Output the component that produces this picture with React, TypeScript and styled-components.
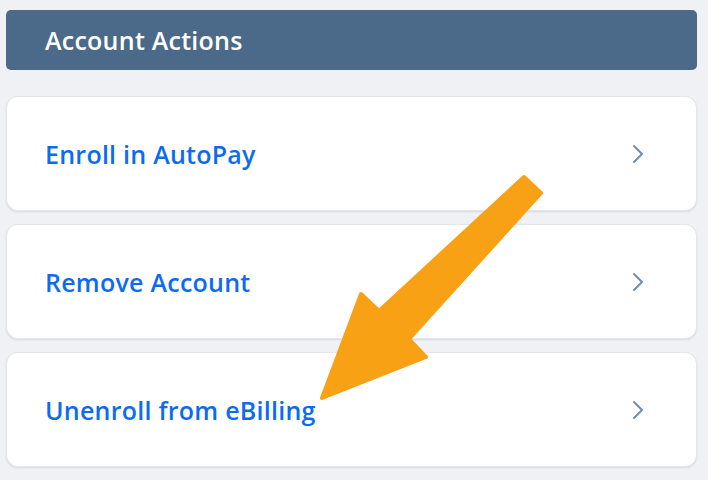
import React from "react";
import styled, { createGlobalStyle } from "styled-components";

const GlobalStyle = createGlobalStyle`
  html, body {
    margin: 0;
    padding: 0;
    background: #eff1f5;
    font-family: "Open Sans", "Noto Sans", sans-serif;
  }
`;

const Page = styled.div`
  position: relative;
  width: 708px;
  height: 480px;
  box-sizing: border-box;
  padding: 10px 11px 0 6px;
  display: flex;
  flex-direction: column;
  overflow: hidden;
`;

const Header = styled.div`
  height: 60px;
  background: #4b6a89;
  border-radius: 5px;
  display: flex;
  align-items: center;
  padding-left: 39px;
  color: #ffffff;
  font-size: 25px;
  font-weight: 600;
  letter-spacing: 0.25px;
  margin-bottom: 26px;
`;

const List = styled.div`
  display: flex;
  flex-direction: column;
  gap: 13px;
`;

const Card = styled.div`
  height: 115px;
  box-sizing: border-box;
  background: #ffffff;
  border-radius: 12px;
  border: 1px solid #e3e6eb;
  box-shadow: 0 1px 2px rgba(30, 40, 60, 0.12);
  display: flex;
  align-items: center;
  justify-content: space-between;
  padding: 0 51px 0 38px;
`;

const Label = styled.span`
  color: #0b6cf1;
  font-size: 25px;
  font-weight: 600;
  letter-spacing: 0.25px;
`;

const Chevron = () => (
  <svg width="14" height="20" viewBox="0 0 14 20" aria-hidden>
    <path
      d="M3 2 L11 10 L3 18"
      fill="none"
      stroke="#6d8db1"
      strokeWidth="2"
      strokeLinecap="round"
      strokeLinejoin="round"
    />
  </svg>
);

const ArrowOverlay = styled.svg`
  position: absolute;
  left: 0;
  top: 0;
  pointer-events: none;
`;

const items = ["Enroll in AutoPay", "Remove Account", "Unenroll from eBilling"];

export default function App() {
  return (
    <>
      <GlobalStyle />
      <Page>
        <Header>Account Actions</Header>
        <List>
          {items.map((t) => (
            <Card key={t}>
              <Label>{t}</Label>
              <Chevron />
            </Card>
          ))}
        </List>
        <ArrowOverlay width="708" height="480" viewBox="0 0 708 480">
          <polygon
            points="524,177 541,193 409,339 426,357 322,398 361,294 379,311"
            fill="#f9a114"
            stroke="#f9a114"
            strokeWidth="4"
            strokeLinejoin="round"
          />
        </ArrowOverlay>
      </Page>
    </>
  );
}
